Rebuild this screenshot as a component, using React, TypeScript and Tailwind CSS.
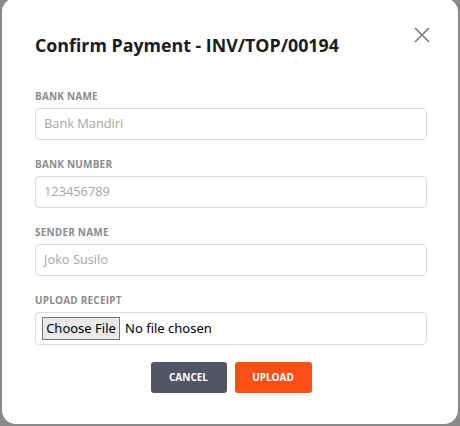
import React from "react";

function Field({ label, placeholder }: { label: string; placeholder: string }) {
  return (
    <div className="flex flex-col">
      <div className="h-[14px] text-[10px] font-bold leading-[14px] tracking-[0.2px] text-[#8c8c8c]">{label}</div>
      <div className="mt-[5px] flex h-[32px] items-center rounded-[4px] border border-[#dcdcdc] px-[8px] text-[12.8px] text-[#a6a6a6]">
        {placeholder}
      </div>
    </div>
  );
}

export default function App() {
  return (
    <div
      className="h-[426px] w-[460px] overflow-hidden bg-[#8a8a8a] px-[2px]"
      style={{ fontFamily: '"Open Sans", "Noto Sans", sans-serif' }}
    >
      <div className="mt-[-2px] h-[426px] rounded-[14px] bg-white pl-[33px] pr-[31px] pt-[35px]">
        <div className="flex items-start justify-between">
          <h1 className="h-[24px] text-[17.8px] font-bold leading-[24px] text-[#1c1c1c]">
            Confirm Payment - INV/TOP/00194
          </h1>
          <svg width="16" height="16" viewBox="0 0 16 16" className="mr-[-3px] mt-[-6px]">
            <path d="M1 1L15 15M15 1L1 15" stroke="#7a7a7a" strokeWidth="1.6" />
          </svg>
        </div>
        <div className="mt-[32px] flex flex-col gap-[17px]">
          <Field label="BANK NAME" placeholder="Bank Mandiri" />
          <Field label="BANK NUMBER" placeholder="123456789" />
          <Field label="SENDER NAME" placeholder="Joko Susilo" />
          <div className="flex flex-col">
            <div className="h-[14px] text-[10px] font-bold leading-[14px] tracking-[0.2px] text-[#8c8c8c]">UPLOAD RECEIPT</div>
            <div className="mt-[5px] flex h-[33px] items-center gap-[5px] rounded-[4px] border border-[#dcdcdc] px-[6px]">
              <div
                className="flex h-[23px] w-[78px] items-center justify-center border border-[#767676] bg-[#e9e9e9] text-[13px] text-black"
                style={{ fontFamily: '"Noto Sans", "Open Sans", sans-serif' }}
              >
                Choose File
              </div>
              <span className="text-[13px] text-black" style={{ fontFamily: '"Noto Sans", "Open Sans", sans-serif' }}>
                No file chosen
              </span>
            </div>
          </div>
        </div>
        <div className="mt-[17px] flex justify-center gap-[8px]">
          <button className="h-[31px] w-[76px] rounded-[3px] bg-[#525565] text-[10px] font-bold text-white">CANCEL</button>
          <button className="h-[31px] w-[77px] rounded-[3px] bg-[#ff4f17] text-[10px] font-bold text-white">UPLOAD</button>
        </div>
      </div>
    </div>
  );
}
